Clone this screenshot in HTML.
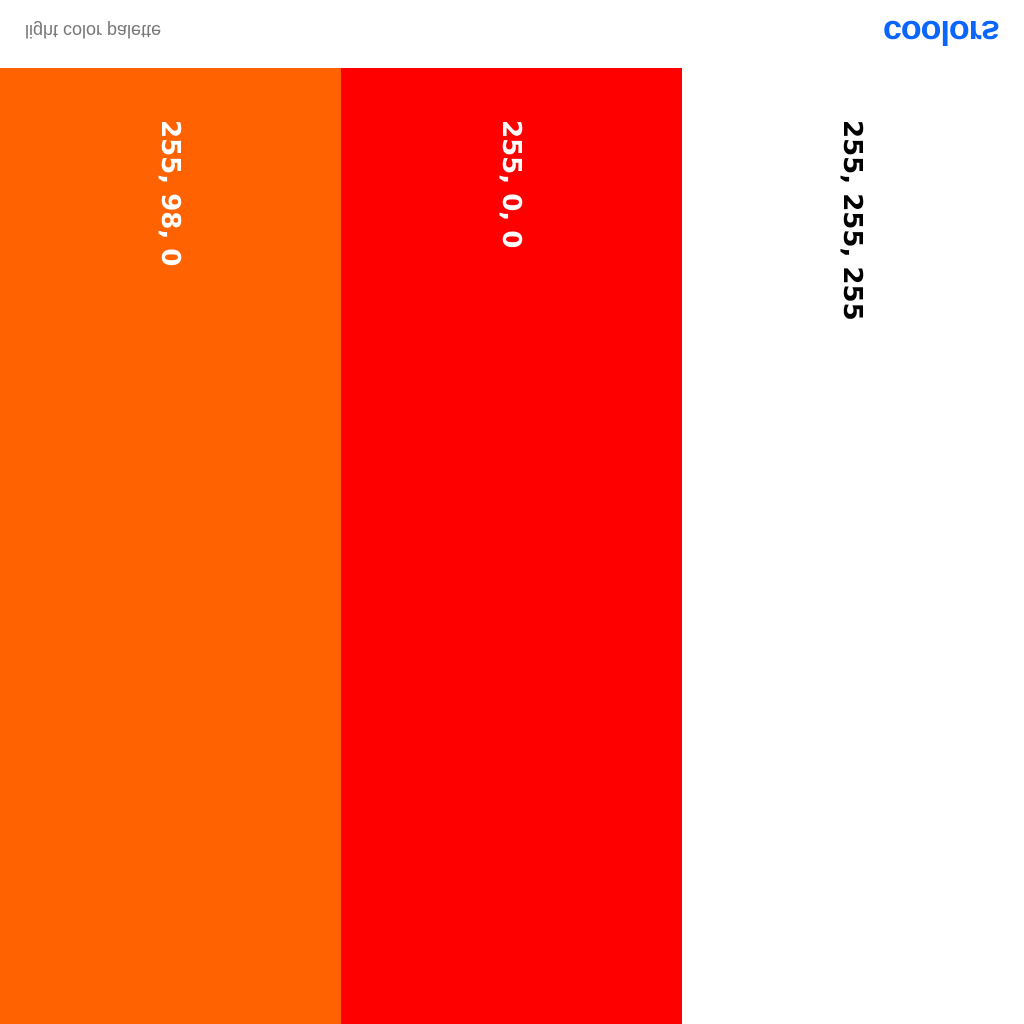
<!DOCTYPE html><html><head><style>
body{margin:0;width:1024px;height:1024px;position:relative;background:#fff;font-family:"Liberation Sans",sans-serif;overflow:hidden}
.h{position:absolute;left:25px;top:20px;font-size:18px;color:#777;transform:scaleY(-1)}
.logo{position:absolute;left:883px;top:12px;font-size:34px;font-weight:bold;color:#0a66ff;transform:scaleY(-1);letter-spacing:-1px}
.c{position:absolute;top:68px;height:956px;width:341px}
.t{position:absolute;top:120px;font-family:"DejaVu Sans",sans-serif;font-size:26px;font-weight:bold;white-space:nowrap;transform-origin:0 0;transform:rotate(90deg)}
</style></head><body>
<div class="h">light color palette</div>
<div class="logo">coolors</div>
<div class="c" style="left:0;background:#ff6200"></div>
<div class="c" style="left:341px;background:#ff0000"></div>
<div class="c" style="left:682px;width:342px;background:#fff"></div>
<div class="t" style="left:185px;color:#fff">255, 98, 0</div>
<div class="t" style="left:526px;color:#fff">255, 0, 0</div>
<div class="t" style="left:867px;color:#000">255, 255, 255</div>
</body></html>
